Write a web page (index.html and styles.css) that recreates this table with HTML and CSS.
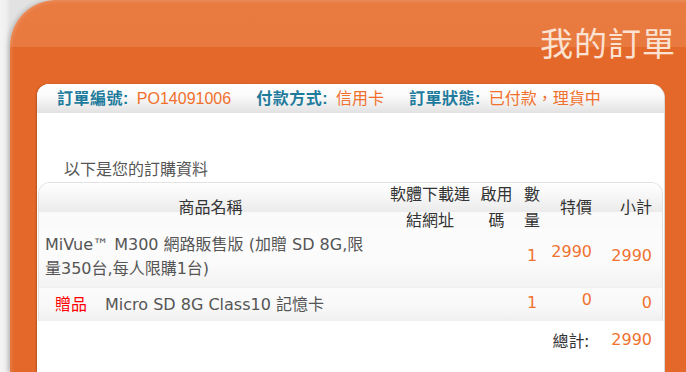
FILE: index.html
```html
<!DOCTYPE html>
<html lang="zh-Hant">
<head>
<meta charset="utf-8">
<title>我的訂單</title>
<link rel="stylesheet" href="styles.css">
</head>
<body>
<div class="frame">
  <header class="top">
    <h1 class="title">我的訂單</h1>
  </header>
  <div class="panel">
    <div class="info">
      <span class="label">訂單編號:</span><span class="value">PO14091006</span>
      <span class="label">付款方式:</span><span class="value">信用卡</span>
      <span class="label">訂單狀態:</span><span class="value">已付款，理貨中</span>
    </div>
    <p class="intro">以下是您的訂購資料</p>
    <div class="order">
      <div class="grid thead">
        <div class="c1">商品名稱</div>
        <div class="c2">軟體下載連<br>結網址</div>
        <div class="c3">啟用<br>碼</div>
        <div class="c4">數<br>量</div>
        <div class="c5">特價</div>
        <div class="c6">小計</div>
      </div>
      <div class="grid row main">
        <div class="c1 name">MiVue™ M300 網路販售版 (加贈 SD 8G,限<br>量350台,每人限購1台)</div>
        <div class="c2"></div>
        <div class="c3"></div>
        <div class="c4 num qty">1</div>
        <div class="c5 num price">2990</div>
        <div class="c6 num sub">2990</div>
      </div>
      <div class="grid row gift">
        <div class="c1 name"><span class="tag">贈品</span>Micro SD 8G Class10 記憶卡</div>
        <div class="c2"></div>
        <div class="c3"></div>
        <div class="c4 num qty">1</div>
        <div class="c5 num price">0</div>
        <div class="c6 num sub">0</div>
      </div>
    </div>
    <div class="grid total">
      <div class="c1"></div>
      <div class="c2"></div>
      <div class="c3"></div>
      <div class="c4"></div>
      <div class="c5 total-label">總計:</div>
      <div class="c6 num">2990</div>
    </div>
  </div>
</div>
</body>
</html>
```

FILE: styles.css
```css
html, body {
  margin: 0;
  padding: 0;
}
body {
  background: linear-gradient(90deg, #f4f4f4 0, #efefef 6px, #e2e2e2 10px);
  background-repeat: no-repeat;
  background-color: #f3f3f3;
  width: 686px;
  height: 372px;
  overflow: hidden;
  font-family: "DejaVu Sans", "Noto Sans CJK TC", sans-serif;
}
.frame {
  margin-left: 10px;
  width: 676px;
  height: 372px;
  background: linear-gradient(#e97a40 0, #e8793f 47px, #e4682a 47px, #e4682a 100%);
  border-top-left-radius: 46px;
  box-shadow: -2px 0 4px rgba(0, 0, 0, 0.18), inset 2px 2px 3px rgba(255, 255, 255, 0.12);
  display: flex;
  flex-direction: column;
}
.top {
  height: 84px;
  display: flex;
  justify-content: flex-end;
  align-items: flex-start;
  padding-right: 10px;
}
.title {
  margin: 0;
  margin-top: 21px;
  font-family: "Noto Sans CJK TC", sans-serif;
  font-weight: 400;
  font-size: 33px;
  line-height: 42px;
  letter-spacing: 1px;
  color: #fbe2d3;
}
.panel {
  flex: 1;
  margin-left: 27px;
  margin-right: 21px;
  background: #fff;
  border-radius: 12px 14px 0 0;
  box-shadow: -1px 0 2px rgba(0, 0, 0, 0.2);
  border-right: 1px solid #d8d8d8;
}
.info {
  height: 29px;
  border-radius: 12px 14px 0 0;
  background: linear-gradient(#ffffff 0, #fbfbfb 40%, #e2e2e2 100%);
  padding-left: 20px;
  display: flex;
  align-items: center;
  font-family: "Liberation Sans", "Noto Sans CJK TC", sans-serif;
  font-size: 16px;
  line-height: 20px;
}
.label {
  color: #1f7b9c;
  font-weight: 700;
  letter-spacing: 0.5px;
  margin-right: 8px;
}
.value {
  color: #f0702c;
  margin-right: 25px;
}
.intro {
  margin: 45px 0 4px 27px;
  font-family: "Noto Sans CJK TC", sans-serif;
  font-size: 16px;
  line-height: 20px;
  color: #555;
}
.order {
  margin-left: 1px;
  margin-right: 1px;
  border: 1px solid #e2e2e2;
  border-bottom: none;
  border-radius: 12px 12px 0 0;
  overflow: hidden;
}
.grid {
  display: grid;
  grid-template-columns: 343px 96px 37px 34px 55px 58px;
}
.thead {
  height: 46px;
  grid-template-rows: 46px;
  align-items: center;
  font-size: 16px;
  line-height: 26px;
  color: #333;
  font-family: "Noto Sans CJK TC", sans-serif;
  background: linear-gradient(#ffffff 0, #f6f6f6 14px, #ebebeb 29px, #fafafa 29px, #fafafa 100%);
}
.c1, .c2, .c3, .c4 { text-align: center; }
.c5 { text-align: right; padding-right: 12px; }
.c6 { text-align: right; padding-right: 10px; }
.row {
  align-items: start;
  font-size: 16px;
  line-height: 24px;
}
.main {
  height: 59px;
  background: linear-gradient(#fcfcfc 0, #fbfbfb 55%, #f2f2f2 100%);
}
.gift {
  height: 33px;
  background: linear-gradient(#fbfbfb 0, #f8f8f8 60%, #efefef 100%);
  box-shadow: 0 1px 2px rgba(0, 0, 0, 0.15);
  position: relative;
}
.name {
  text-align: left;
  color: #555;
  padding-left: 6px;
  white-space: nowrap;
}
.main .name { padding-top: 4px; }
.main .num { padding-top: 15px; }
.main .price { padding-top: 11px; }
.gift .name { padding-top: 3px; padding-left: 16px; }
.gift .num { padding-top: 3px; }
.gift .price { padding-top: 0; }
.tag {
  color: #ff0000;
  font-family: "Noto Sans CJK TC", sans-serif;
  margin-right: 18px;
}
.num {
  color: #f0722f;
}
.total {
  padding-top: 7px;
  font-size: 16px;
  line-height: 24px;
  margin-left: 2px;
}
.total-label {
  color: #333;
  font-family: "Noto Sans CJK TC", sans-serif;
  padding-right: 15px;
}
```
